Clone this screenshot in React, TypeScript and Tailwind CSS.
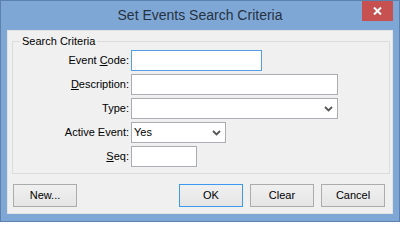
import React from "react";

const font = { fontFamily: '"Liberation Sans", Arial, sans-serif' };

function Chevron() {
  return (
    <svg width="9" height="6" viewBox="0 0 9 6" className="shrink-0">
      <path d="M1 1 L4.5 4.5 L8 1" fill="none" stroke="#555" strokeWidth="1.8" />
    </svg>
  );
}

function Label({ pre = "", u = "", post = "" }: { pre?: string; u?: string; post?: string }) {
  return (
    <div className="flex items-center justify-end text-[11px] text-black h-[21px]">
      <span>
        {pre}
        {u && <span className="underline underline-offset-[1px]">{u}</span>}
        {post}
      </span>
    </div>
  );
}

function Button({ children, primary = false }: { children: React.ReactNode; primary?: boolean }) {
  return (
    <button
      className={`w-[64px] h-[23px] text-[11px] text-black border bg-gradient-to-b from-[#f0f0f0] to-[#e5e5e5] flex items-center justify-center ${
        primary ? "border-[#3c98f0]" : "border-[#acacac]"
      }`}
    >
      {children}
    </button>
  );
}

export default function App() {
  return (
    <div
      className="w-[400px] h-[222px] bg-[#7fa7d6] border border-[#5d81ae] flex flex-col relative overflow-hidden"
      style={font}
    >
      {/* Title bar */}
      <div className="h-[29px] flex items-center justify-center text-[14px] text-[#26323f] pb-[1px]">
        Set Events Search Criteria
      </div>
      <button className="absolute top-[-1px] right-[6px] w-[31px] h-[21px] bg-[#c75050] flex items-center justify-center">
        <svg width="9" height="8" viewBox="0 0 9 8">
          <path d="M1 0.5 L8 7.5 M8 0.5 L1 7.5" stroke="#fff" strokeWidth="2" />
        </svg>
      </button>

      {/* Client area */}
      <div className="ml-[6px] w-[386px] h-[184px] bg-[#f0f0f0] border border-[#e2e2e2] flex flex-col">
        <fieldset className="ml-[4px] mt-[3px] w-[378px] border border-[#dcdcdc] pb-[6px] pt-[2px]">
          <legend className="ml-[7px] px-[2px] text-[11px] leading-[14px] text-black">Search Criteria</legend>
          <div className="grid grid-cols-[116px_auto] gap-x-[2px] gap-y-[3px]">
            <Label pre="Event " u="C" post="ode:" />
            <div className="w-[131px] h-[21px] bg-white border border-[#569de5]" />

            <Label u="D" post="escription:" />
            <div className="w-[207px] h-[21px] bg-white border border-[#abadb3]" />

            <Label pre="Type:" />
            <div className="w-[207px] h-[21px] bg-white border border-[#abadb3] flex items-center justify-end pr-[4px]">
              <Chevron />
            </div>

            <Label pre="Active Event:" />
            <div className="w-[95px] h-[21px] bg-white border border-[#abadb3] flex items-center justify-between pl-[2px] pr-[4px] text-[11px] text-black">
              <span>Yes</span>
              <Chevron />
            </div>

            <Label u="S" post="eq:" />
            <div className="w-[66px] h-[21px] bg-white border border-[#abadb3]" />
          </div>
        </fieldset>

        <div className="mt-[10px] pl-[5px] pr-[7px] flex items-center">
          <Button>New...</Button>
          <div className="ml-auto flex gap-[7px]">
            <Button primary>OK</Button>
            <Button>Clear</Button>
            <Button>Cancel</Button>
          </div>
        </div>
      </div>
    </div>
  );
}
